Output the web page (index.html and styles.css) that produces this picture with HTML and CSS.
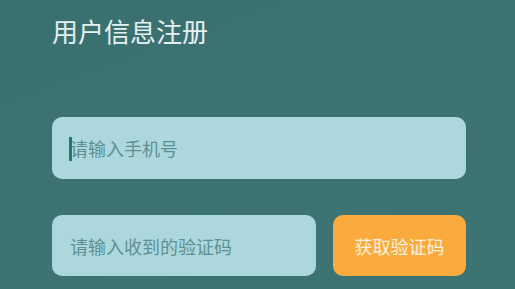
FILE: index.html
```html
<!DOCTYPE html>
<html lang="zh-CN">
<head>
    <meta charset="UTF-8">
    <meta name="viewport" content="width=device-width, initial-scale=1.0">
    <title>用户信息注册</title>
    <link rel="stylesheet" href="styles.css">
</head>
<body>
    <div class="page">
        <h1 class="title">用户信息注册</h1>

        <form class="register-form">
            <div class="field">
                <span class="caret"></span>
                <input type="tel" class="field-input" placeholder="请输入手机号" aria-label="手机号">
            </div>

            <div class="code-row">
                <div class="field code-field">
                    <input type="text" class="field-input" placeholder="请输入收到的验证码" aria-label="验证码">
                </div>
                <button type="button" class="code-button">获取验证码</button>
            </div>
        </form>
    </div>
</body>
</html>
```

FILE: styles.css
```css
html, body {
    margin: 0;
    height: 100%;
}

body {
    font-family: "Noto Sans CJK SC", "Noto Sans", sans-serif;
    background-color: #3b7170;
    background-image: linear-gradient(160deg, #3a6f6f 0%, #3d7473 55%, #3b7372 100%);
}

.page {
    padding: 13px 49px 0 52px;
}

.title {
    margin: 0;
    font-size: 26px;
    font-weight: 400;
    line-height: 36px;
    color: #e6f2f2;
}

.register-form {
    margin-top: 68px;
    display: flex;
    flex-direction: column;
    gap: 36px;
}

.field {
    position: relative;
    height: 62px;
    border-radius: 10px;
    background-color: #acd8dd;
    display: flex;
    align-items: center;
}

.field-input {
    width: 100%;
    height: 100%;
    box-sizing: border-box;
    padding: 0 18px;
    border: none;
    outline: none;
    background: transparent;
    font-family: inherit;
    font-size: 18px;
    color: #2f5f63;
}

.field-input::placeholder {
    color: #5e8f94;
}

.caret {
    position: absolute;
    left: 17px;
    top: 20px;
    width: 3px;
    height: 24px;
    background-color: #1d7a70;
}

.code-row {
    display: flex;
    gap: 17px;
}

.code-field {
    flex: 1;
    height: 61px;
}

.code-button {
    width: 133px;
    height: 61px;
    border: none;
    border-radius: 10px;
    background-color: #fbab3d;
    color: #fdf0dc;
    font-family: inherit;
    font-size: 18px;
    cursor: pointer;
}
```
